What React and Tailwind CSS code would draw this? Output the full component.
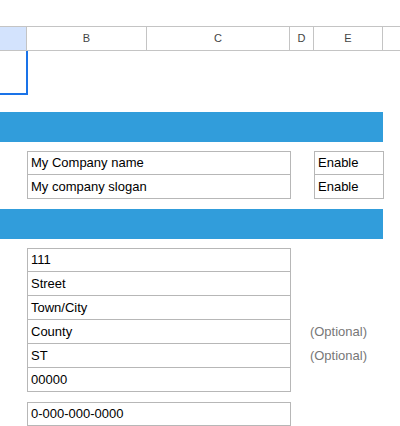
const cols = [
  { label: "", w: 27 },
  { label: "B", w: 120 },
  { label: "C", w: 143 },
  { label: "D", w: 24 },
  { label: "E", w: 69 },
  { label: "", w: 40 },
];

const Cell = ({ children, first }) => (
  <div
    className={`h-[24px] flex items-center px-[3px] border-x border-b border-[#b7b7b7] text-[13px] text-black ${first ? "border-t" : ""}`}
  >
    {children}
  </div>
);

export default function App() {
  const address = ["111", "Street", "Town/City", "County", "ST", "00000"];
  return (
    <div className="w-[400px] h-[426px] overflow-hidden bg-white" style={{ fontFamily: '"Liberation Sans", Arial, sans-serif' }}>
      <div className="h-[26px]" />
      <div className="flex h-[25px] border-y border-[#c4c4c4]">
        {cols.map((c, i) => (
          <div
            key={i}
            style={{ width: c.w }}
            className={`shrink-0 flex items-center justify-center text-[11px] text-[#444] border-r border-[#c4c4c4] ${i === 0 ? "bg-[#d3e3fd]" : ""}`}
          >
            {c.label}
          </div>
        ))}
      </div>
      <div className="w-[28px] h-[44px] border-2 border-l-0 border-t-0 border-[#1a73e8]" />
      <div className="mt-[17px] h-[30px] w-[383px] bg-[#319ddb]" />
      <div className="mt-[9px] flex">
        <div className="w-[27px] shrink-0" />
        <div className="w-[264px]">
          <Cell first>My Company name</Cell>
          <Cell>My company slogan</Cell>
        </div>
        <div className="w-[23px]" />
        <div className="w-[70px]">
          <Cell first>Enable</Cell>
          <Cell>Enable</Cell>
        </div>
      </div>
      <div className="mt-[10px] h-[30px] w-[383px] bg-[#319ddb]" />
      <div className="mt-[9px] flex">
        <div className="w-[27px] shrink-0" />
        <div className="w-[264px]">
          {address.map((a, i) => (
            <Cell key={i} first={i === 0}>{a}</Cell>
          ))}
        </div>
        <div className="w-[76px] flex flex-col">
          <div className="h-[72px]" />
          {[0, 1].map((i) => (
            <div key={i} className="h-[24px] flex items-center justify-end text-[13px] text-[#777]">
              (Optional)
            </div>
          ))}
        </div>
      </div>
      <div className="mt-[10px] flex">
        <div className="w-[27px] shrink-0" />
        <div className="w-[264px]">
          <Cell first>0-000-000-0000</Cell>
        </div>
      </div>
    </div>
  );
}
